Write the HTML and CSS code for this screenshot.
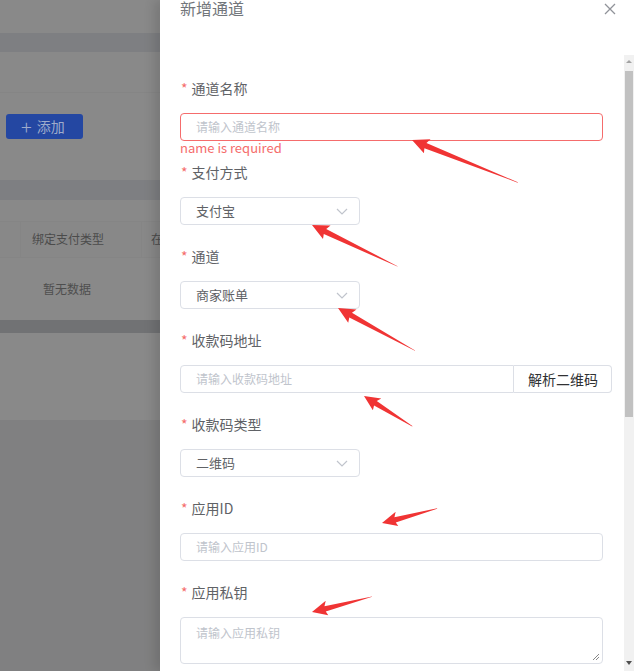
FILE: index.html
```html
<!DOCTYPE html>
<html lang="zh-CN">
<head>
<meta charset="utf-8">
<title>新增通道</title>
<link rel="stylesheet" href="styles.css">
</head>
<body>
<div class="page">
  <div class="bg">
    <div class="card h33"></div>
    <div class="band h19"></div>
    <div class="card toolbar">
      <div class="toolbar-top"></div>
      <div class="toolbar-body">
        <div class="add-btn"><span class="plus">+</span><span>添加</span></div>
      </div>
    </div>
    <div class="band h20"></div>
    <div class="card table">
      <div class="table-gap"></div>
      <div class="thead">
        <div class="th first"></div>
        <div class="th mid">绑定支付类型</div>
        <div class="th last">在</div>
      </div>
      <div class="tbody"><span class="empty">暂无数据</span></div>
    </div>
    <div class="hscroll"></div>
    <div class="card h87"></div>
    <div class="band fill"></div>
  </div>

  <div class="drawer">
    <div class="drawer-header">
      <span class="title">新增通道</span>
      <svg class="close" width="12" height="12" viewBox="0 0 12 12"><path d="M1 1 L11 11 M11 1 L1 11" stroke="#909399" stroke-width="1.3" fill="none"/></svg>
    </div>
    <div class="drawer-body">
      <div class="form">
        <div class="item">
          <div class="label"><span class="req">*</span>通道名称</div>
          <div class="control">
            <div class="input error"><span class="ph">请输入通道名称</span></div>
            <div class="err-msg">name is required</div>
          </div>
        </div>
        <div class="item">
          <div class="label"><span class="req">*</span>支付方式</div>
          <div class="select"><span class="val">支付宝</span><svg class="chev" width="12" height="7" viewBox="0 0 12 7"><path d="M1 1 L6 6 L11 1" stroke="#c0c4cc" stroke-width="1.2" fill="none"/></svg></div>
        </div>
        <div class="item">
          <div class="label"><span class="req">*</span>通道</div>
          <div class="select"><span class="val">商家账单</span><svg class="chev" width="12" height="7" viewBox="0 0 12 7"><path d="M1 1 L6 6 L11 1" stroke="#c0c4cc" stroke-width="1.2" fill="none"/></svg></div>
        </div>
        <div class="item">
          <div class="label"><span class="req">*</span>收款码地址</div>
          <div class="group">
            <div class="input left"><span class="ph">请输入收款码地址</span></div>
            <div class="append">解析二维码</div>
          </div>
        </div>
        <div class="item">
          <div class="label"><span class="req">*</span>收款码类型</div>
          <div class="select"><span class="val">二维码</span><svg class="chev" width="12" height="7" viewBox="0 0 12 7"><path d="M1 1 L6 6 L11 1" stroke="#c0c4cc" stroke-width="1.2" fill="none"/></svg></div>
        </div>
        <div class="item">
          <div class="label"><span class="req">*</span>应用ID</div>
          <div class="input"><span class="ph">请输入应用ID</span></div>
        </div>
        <div class="item">
          <div class="label"><span class="req">*</span>应用私钥</div>
          <div class="textarea"><span class="ph">请输入应用私钥</span>
            <svg class="grip" width="8" height="8" viewBox="0 0 8 8"><path d="M7 1 L1 7 M7 4 L4 7" stroke="#888" stroke-width="1" fill="none"/></svg>
          </div>
        </div>
      </div>
      <div class="scrollbar">
        <div class="sb-up"></div>
        <div class="sb-thumb"></div>
        <div class="sb-track"></div>
        <div class="sb-down"></div>
      </div>
    </div>
  </div>

  <svg class="annotations" width="634" height="671" viewBox="0 0 634 671">
    <g fill="#f03434">
      <polygon transform="translate(412,140) rotate(21.6)" points="0,0 17,-7.5 14.5,-2.6 114,0.4 114,0.8 14.5,3 16,8"/>
      <polygon transform="translate(312,225) rotate(25.5)" points="0,0 17,-7.5 14.5,-2.6 95,0.4 95,0.8 14.5,3 16,8"/>
      <polygon transform="translate(338,308) rotate(28.6)" points="0,0 17,-7.5 14.5,-2.6 88,0.4 88,0.8 14.5,3 16,8"/>
      <polygon transform="translate(364,396) rotate(31.5)" points="0,0 16,-7 13.5,-2.4 57,0.4 57,0.8 13.5,2.8 15,7.5"/>
      <polygon transform="translate(382,523) rotate(-14.3)" points="0,0 16,-7.5 13.5,-2.6 57,-0.6 57,-0.2 13.5,2.8 15,7"/>
      <polygon transform="translate(312,612) rotate(-14)" points="0,0 16,-7.5 13.5,-2.6 62,-0.6 62,-0.2 13.5,2.8 15,7"/>
    </g>
  </svg>
</div>
</body>
</html>
```

FILE: styles.css
```css
* { box-sizing: border-box; }
html, body { margin: 0; padding: 0; }
body {
  font-family: "Noto Sans CJK SC", "Noto Sans", sans-serif;
  background: #7e7f82;
}
.page {
  position: relative;
  width: 634px;
  height: 671px;
  display: flex;
  overflow: hidden;
}
/* ---- dimmed background page ---- */
.bg {
  width: 160px;
  flex: none;
  display: flex;
  flex-direction: column;
  background: #7e7f82;
}
.card { background: #898989; }
.band { background: #7e7f82; }
.h33 { height: 33px; }
.h19 { height: 19px; }
.h20 { height: 20px; }
.h87 { height: 87px; }
.fill { flex: 1; background: #808081; }
.toolbar { height: 128px; display: flex; flex-direction: column; }
.toolbar-top { height: 41px; border-bottom: 1px solid #858585; }
.toolbar-body { padding: 21px 0 0 6px; }
.add-btn {
  width: 77px;
  height: 25px;
  border-radius: 3px;
  background: #2447a2;
  color: #9eabcb;
  font-size: 14px;
  line-height: 25px;
  display: flex;
  align-items: center;
  padding-left: 15px;
  gap: 5px;
}
.plus { font-size: 20px; font-weight: 300; line-height: 25px; }
.table { height: 120px; display: flex; flex-direction: column; }
.table-gap { height: 22px; border-bottom: 1px solid #858585; }
.thead {
  height: 36px;
  display: flex;
  border-bottom: 1px solid #858585;
  background: #888888;
}
.th {
  font-size: 12px;
  color: #4b4b4b;
  line-height: 34px;
  white-space: nowrap;
  overflow: hidden;
}
.th.first { width: 21px; border-right: 1px solid #858585; }
.th.mid { width: 121px; border-right: 1px solid #858585; padding-left: 11px; }
.th.last { flex: 1; padding-left: 9px; }
.tbody { flex: 1; padding-left: 43px; padding-top: 17px; }
.empty { font-size: 12px; color: #4e4e4e; line-height: 18px; }
.hscroll { height: 13px; background: #717274; }

/* ---- drawer ---- */
.drawer {
  width: 474px;
  flex: none;
  background: #fff;
  display: flex;
  flex-direction: column;
  box-shadow: -6px 0 10px rgba(0, 0, 0, 0.12);
  position: relative;
}
.drawer-header {
  height: 55px;
  flex: none;
  display: flex;
  justify-content: space-between;
  align-items: flex-start;
  padding: 0 18px 0 20px;
}
.title {
  font-size: 16px;
  line-height: 16px;
  margin-top: 0;
  color: #72767b;
}
.close { margin-top: 3px; }
.drawer-body {
  flex: 1;
  display: flex;
  min-height: 0;
}
.form {
  flex: 1;
  padding: 18px 21px 0 20px;
  overflow: hidden;
}
.item { margin-bottom: 16px; }
.label {
  height: 32px;
  line-height: 30px;
  font-size: 14px;
  color: #606266;
  margin-bottom: 8px;
  padding-left: 1px;
}
.req { color: #f56c6c; margin-right: 4px; }
.control { position: relative; }
.input, .select, .textarea {
  height: 28px;
  border: 1px solid #dcdfe6;
  border-radius: 4px;
  display: flex;
  align-items: center;
  padding: 0 15px;
  font-size: 12px;
}
.input.error { border-color: #f56c6c; }
.ph { color: #c0c4cc; line-height: 16px; }
.err-msg {
  position: absolute;
  top: 100%;
  left: 0;
  font-size: 13px;
  line-height: 13px;
  color: #f56c6c;
}
.select {
  width: 180px;
  justify-content: space-between;
  padding-right: 11px;
}
.val { color: #606266; font-size: 13px; line-height: 16px; }
.chev { margin-top: 1px; }
.group {
  display: flex;
  width: calc(100% + 9px);
}
.input.left {
  width: 334px;
  flex: none;
  border-radius: 4px 0 0 4px;
}
.append {
  flex: 1;
  height: 28px;
  border: 1px solid #dcdfe6;
  border-left: none;
  border-radius: 0 4px 4px 0;
  font-size: 14px;
  line-height: 26px;
  color: #303133;
  padding-left: 14px;
  white-space: nowrap;
}
.textarea {
  height: 47px;
  align-items: flex-start;
  padding-top: 7px;
  position: relative;
}
.grip { position: absolute; right: 2px; bottom: 2px; }

/* ---- scrollbar ---- */
.scrollbar {
  width: 10px;
  flex: none;
  display: flex;
  flex-direction: column;
  background: #f1f1f1;
}
.sb-up, .sb-down { height: 16px; position: relative; }
.sb-up::after, .sb-down::after {
  content: "";
  position: absolute;
  left: 2px;
  border-left: 3px solid transparent;
  border-right: 3px solid transparent;
}
.sb-up::after { top: 5px; border-bottom: 3px solid #a3a3a3; }
.sb-down::after { top: 6px; border-top: 4px solid #505050; }
.sb-thumb { height: 346px; background: #c1c1c1; margin: 0 1px; }
.sb-track { flex: 1; }

.annotations {
  position: absolute;
  left: 0;
  top: 0;
  pointer-events: none;
}
```
